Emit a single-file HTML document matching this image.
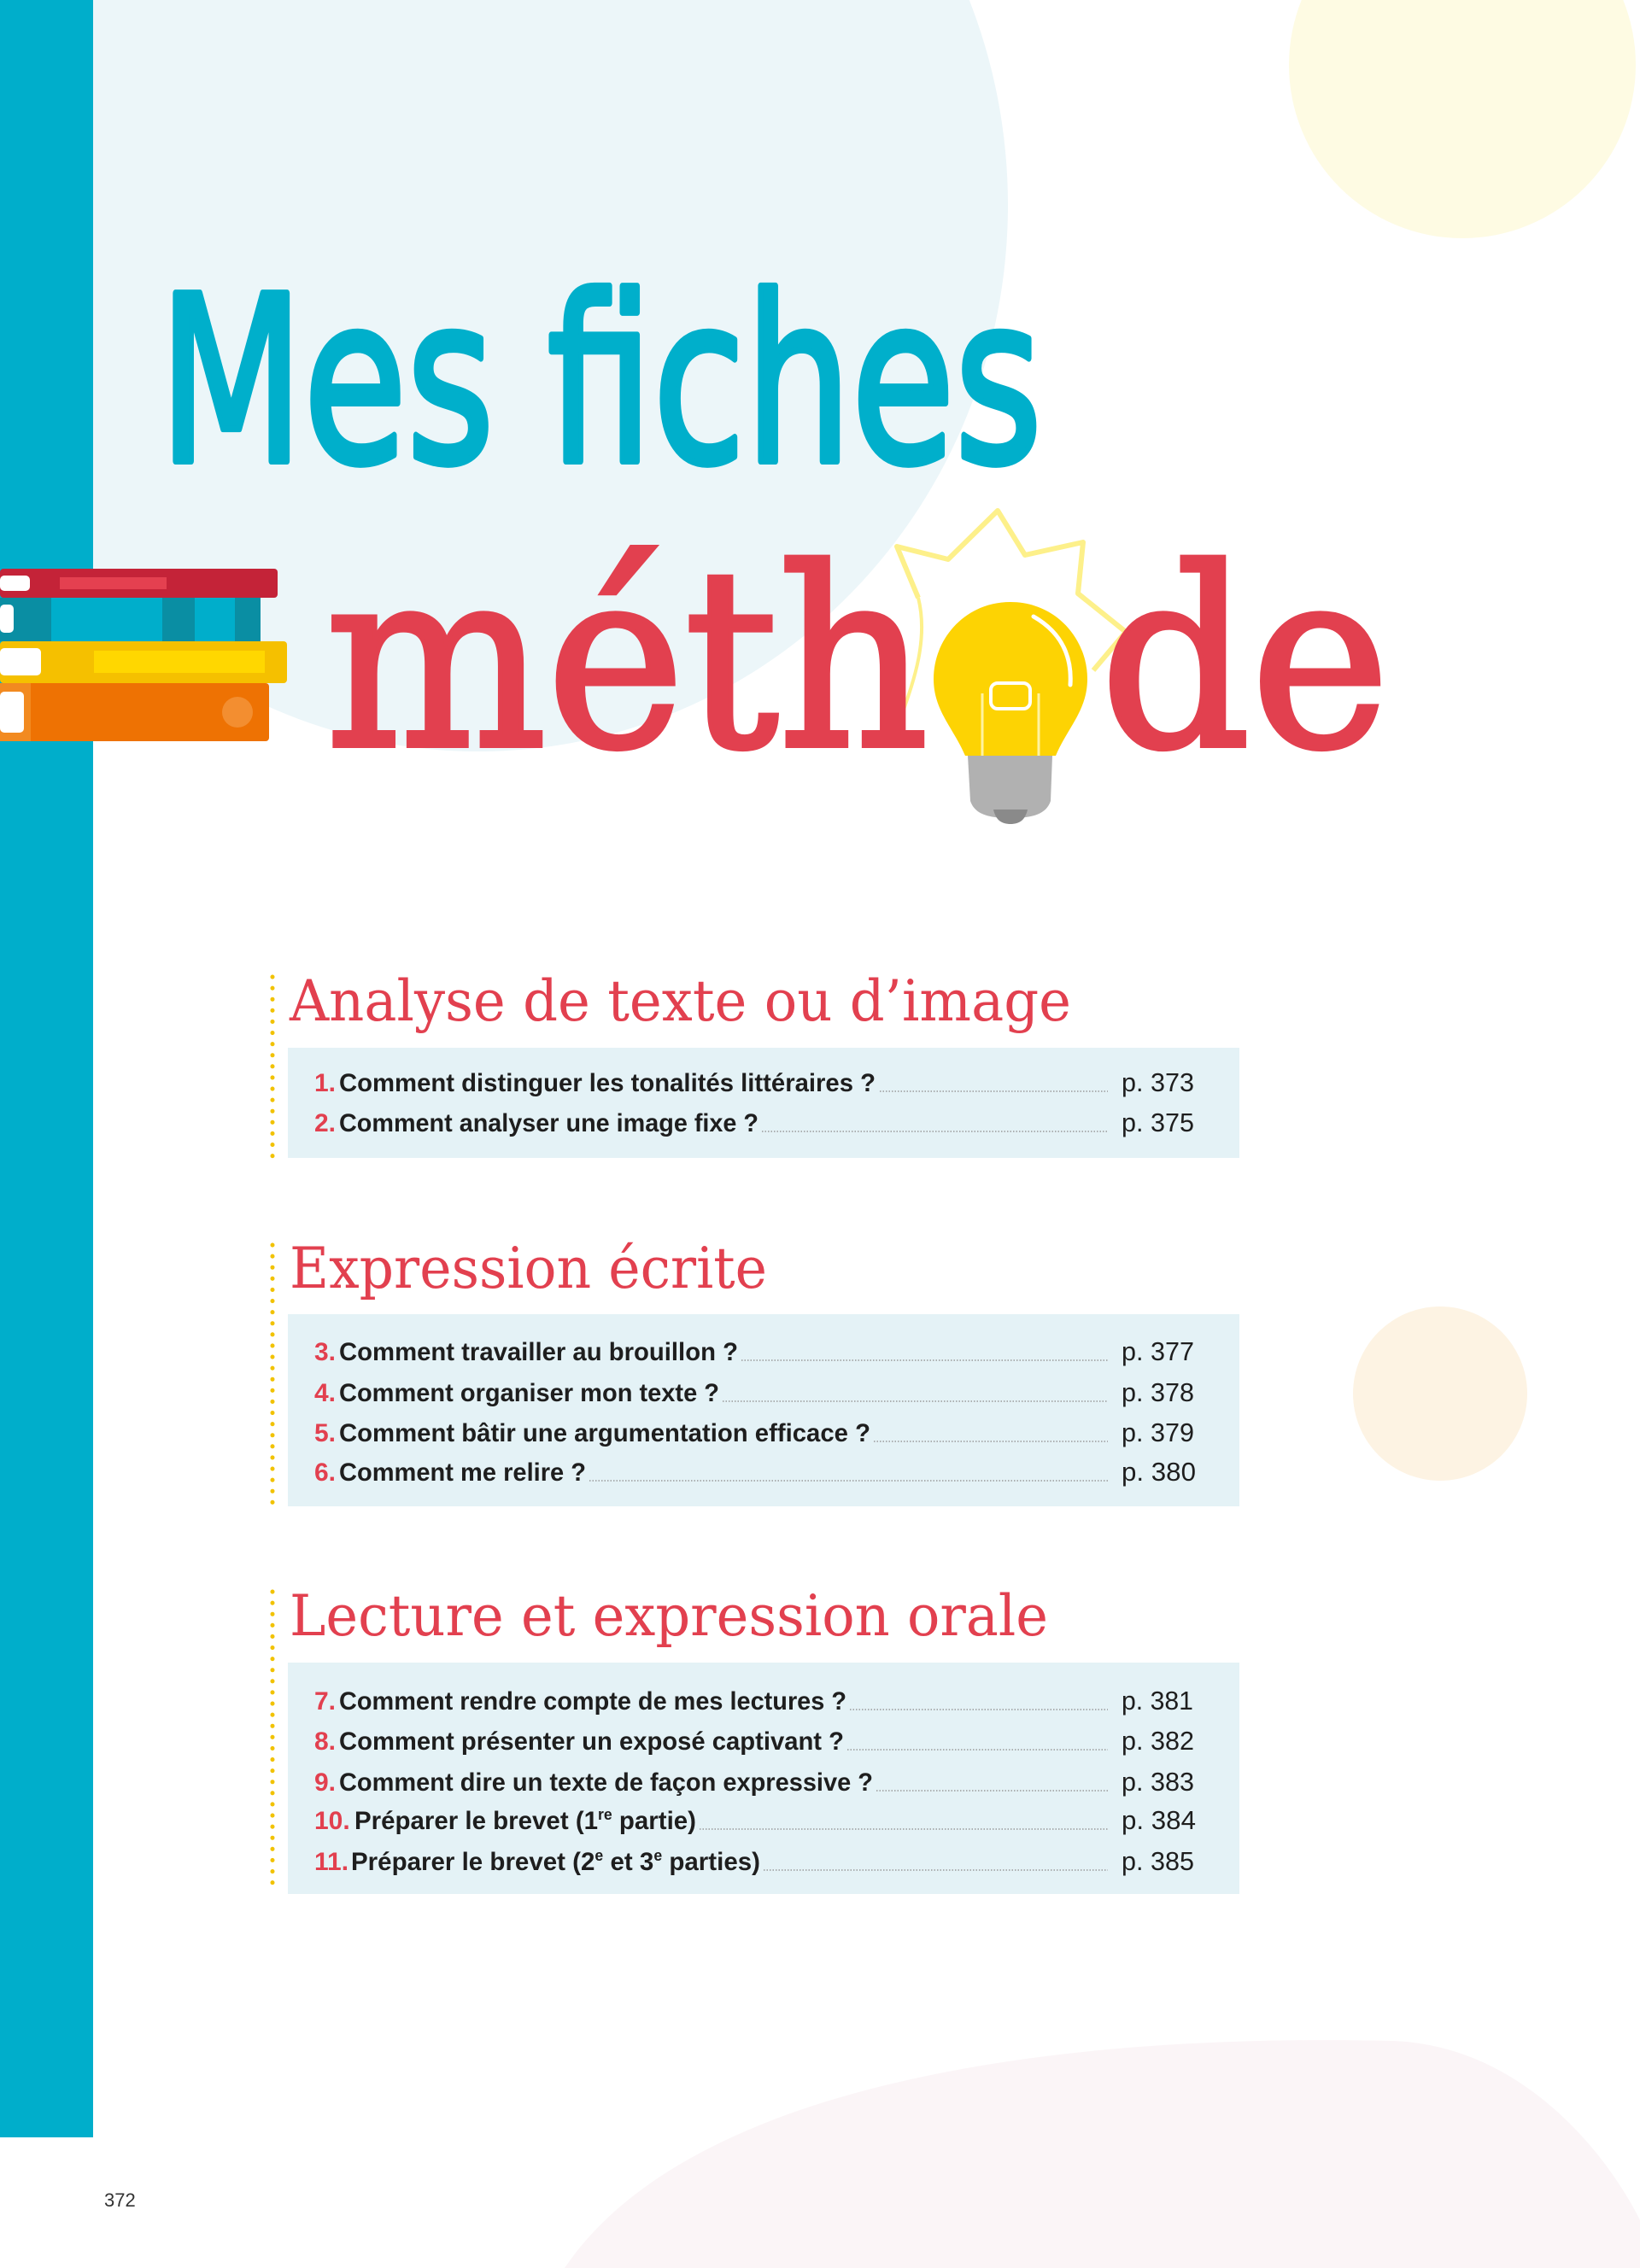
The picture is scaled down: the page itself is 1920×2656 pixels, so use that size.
<!DOCTYPE html>
<html><head><meta charset="utf-8"><style>
html,body{margin:0;padding:0;background:#fff}
body{width:1920px;height:2656px;position:relative;overflow:hidden}
svg{position:absolute;left:0;top:0}
</style></head><body>
<svg width="1920" height="2656" viewBox="0 0 1920 2656" xmlns="http://www.w3.org/2000/svg">
<ellipse cx="560" cy="240" rx="620" ry="640" fill="#ecf6f9"/>
<circle cx="1712" cy="76" r="203" fill="#fefbe3"/>
<circle cx="1686" cy="1632" r="102" fill="#fdf3e3"/>
<path d="M661 2656 C800 2450 1200 2380 1630 2390 C1780 2395 1880 2520 1920 2600 L1920 2656 Z" fill="#fbf5f7"/>
<rect x="0" y="0" width="109" height="2503" fill="#00aecb"/>

<text x="186" y="540" font-family="DejaVu Sans, sans-serif" font-size="270" fill="#00afcb" stroke="#00afcb" stroke-width="8" stroke-linejoin="round" textLength="1034" lengthAdjust="spacingAndGlyphs">Mes fiches</text>

<rect x="0" y="666" width="325" height="34" rx="4" fill="#c42338"/>
<rect x="70" y="676" width="125" height="14" fill="#e44050"/>
<rect x="0" y="674" width="35" height="18" rx="5" fill="#fff"/>
<rect x="0" y="700" width="305" height="51" rx="4" fill="#00aecb"/>
<rect x="190" y="700" width="38" height="51" fill="#0a8ea3"/>
<rect x="275" y="700" width="30" height="51" fill="#0a8ea3"/>
<rect x="0" y="700" width="60" height="51" fill="#0a8ea3"/>
<rect x="0" y="708" width="16" height="33" rx="5" fill="#fff"/>
<rect x="0" y="751" width="336" height="49" rx="4" fill="#f5c000"/>
<rect x="110" y="762" width="200" height="26" fill="#ffd700"/>
<rect x="0" y="759" width="48" height="32" rx="5" fill="#fff"/>
<rect x="0" y="800" width="315" height="68" rx="4" fill="#ee7203"/>
<rect x="0" y="800" width="36" height="68" fill="#f28a20"/>
<rect x="0" y="810" width="28" height="48" rx="5" fill="#fff"/>
<ellipse cx="278" cy="834" rx="18" ry="18" fill="#f38e30"/>

<path d="M1075 700 L1050 640 L1110 655 L1168 598 L1200 650 L1268 635 L1262 695 L1318 740 L1280 785" fill="none" stroke="#fdf08a" stroke-width="6" stroke-linejoin="round"/>
<path d="M1075 700 C1090 760 1060 820 1048 860" fill="none" stroke="#fdf08a" stroke-width="4"/>

<text x="381" y="873" font-family="DejaVu Serif, serif" font-size="290" fill="#e2404f" stroke="#e2404f" stroke-width="6" textLength="706" lengthAdjust="spacingAndGlyphs">méth</text>
<text x="1288" y="873" font-family="DejaVu Serif, serif" font-size="290" fill="#e2404f" stroke="#e2404f" stroke-width="6" textLength="339" lengthAdjust="spacingAndGlyphs">de</text>

<path d="M1183 705 C1236 705 1273 748 1273 795 C1273 832 1250 852 1236 885 L1130 885 C1116 852 1093 832 1093 795 C1093 748 1130 705 1183 705 Z" fill="#fdd303"/>
<path d="M1150 812 L1150 885 M1216 812 L1216 885" stroke="#fff3a0" stroke-width="3" fill="none"/>
<rect x="1160" y="800" width="46" height="30" rx="8" fill="none" stroke="#fff" stroke-width="4"/>
<path d="M1210 722 C1245 742 1255 772 1253 802" stroke="#fff" stroke-width="5" fill="none" stroke-linecap="round"/>
<path d="M1133 885 L1232 885 L1230 938 C1225 953 1210 958 1183 958 C1156 958 1141 953 1136 938 Z" fill="#b1b1b1"/>
<path d="M1163 948 L1203 948 C1200 961 1193 965 1183 965 C1173 965 1166 961 1163 948 Z" fill="#8a8a8a"/>

<line x1="319" y1="1144" x2="319" y2="1356" stroke="#f1c200" stroke-width="5" stroke-dasharray="0.1 13" stroke-linecap="round"/>
<text x="339" y="1195" font-family="DejaVu Serif, serif" font-size="66" fill="#e2404f" textLength="915" lengthAdjust="spacingAndGlyphs">Analyse de texte ou d’image</text>
<rect x="337" y="1227" width="1114" height="129" fill="#e4f2f6"/>

<line x1="319" y1="1458" x2="319" y2="1763" stroke="#f1c200" stroke-width="5" stroke-dasharray="0.1 13" stroke-linecap="round"/>
<text x="339" y="1508" font-family="DejaVu Serif, serif" font-size="66" fill="#e2404f" textLength="559" lengthAdjust="spacingAndGlyphs">Expression écrite</text>
<rect x="337" y="1539" width="1114" height="225" fill="#e4f2f6"/>

<line x1="319" y1="1864" x2="319" y2="2217" stroke="#f1c200" stroke-width="5" stroke-dasharray="0.1 13" stroke-linecap="round"/>
<text x="339" y="1915" font-family="DejaVu Serif, serif" font-size="66" fill="#e2404f" textLength="888" lengthAdjust="spacingAndGlyphs">Lecture et expression orale</text>
<rect x="337" y="1947" width="1114" height="271" fill="#e4f2f6"/>

<g font-family="Liberation Sans, sans-serif" font-size="30">
<g font-weight="bold" fill="#e2404f">
<text x="368" y="1278">1.</text><text x="368" y="1325">2.</text>
<text x="368" y="1593">3.</text><text x="368" y="1641">4.</text><text x="368" y="1688">5.</text><text x="368" y="1734">6.</text>
<text x="368" y="2002">7.</text><text x="368" y="2049">8.</text><text x="368" y="2097">9.</text><text x="368" y="2142">10.</text><text x="368" y="2190">11.</text>
</g>
<g font-weight="bold" fill="#1e1e1e">
<text x="397" y="1278" textLength="628" lengthAdjust="spacingAndGlyphs">Comment distinguer les tonalités littéraires ?</text>
<text x="397" y="1325" textLength="491" lengthAdjust="spacingAndGlyphs">Comment analyser une image fixe ?</text>
<text x="397" y="1593" textLength="467" lengthAdjust="spacingAndGlyphs">Comment travailler au brouillon ?</text>
<text x="397" y="1641" textLength="445" lengthAdjust="spacingAndGlyphs">Comment organiser mon texte ?</text>
<text x="397" y="1688" textLength="622" lengthAdjust="spacingAndGlyphs">Comment bâtir une argumentation efficace ?</text>
<text x="397" y="1734" textLength="289" lengthAdjust="spacingAndGlyphs">Comment me relire ?</text>
<text x="397" y="2002" textLength="594" lengthAdjust="spacingAndGlyphs">Comment rendre compte de mes lectures ?</text>
<text x="397" y="2049" textLength="591" lengthAdjust="spacingAndGlyphs">Comment présenter un exposé captivant ?</text>
<text x="397" y="2097" textLength="625" lengthAdjust="spacingAndGlyphs">Comment dire un texte de façon expressive ?</text>
<text x="415" y="2142" textLength="400" lengthAdjust="spacingAndGlyphs">Préparer le brevet (1<tspan font-size="18" dy="-11">re</tspan><tspan dy="11"> partie)</tspan></text>
<text x="411" y="2190" textLength="479" lengthAdjust="spacingAndGlyphs">Préparer le brevet (2<tspan font-size="18" dy="-11">e</tspan><tspan dy="11"> et 3</tspan><tspan font-size="18" dy="-11">e</tspan><tspan dy="11"> parties)</tspan></text>
</g>
<g stroke="#9a9a9a" stroke-width="1.5" stroke-dasharray="1.5 2">
<line x1="1030" y1="1278" x2="1297" y2="1278"/>
<line x1="892" y1="1325" x2="1297" y2="1325"/>
<line x1="868" y1="1593" x2="1297" y2="1593"/>
<line x1="846" y1="1641" x2="1297" y2="1641"/>
<line x1="1023" y1="1688" x2="1297" y2="1688"/>
<line x1="690" y1="1734" x2="1297" y2="1734"/>
<line x1="995" y1="2002" x2="1297" y2="2002"/>
<line x1="992" y1="2049" x2="1297" y2="2049"/>
<line x1="1026" y1="2097" x2="1297" y2="2097"/>
<line x1="819" y1="2142" x2="1297" y2="2142"/>
<line x1="894" y1="2190" x2="1297" y2="2190"/>
</g>
<g fill="#1e1e1e" font-size="31">
<text x="1313" y="1278" textLength="85" lengthAdjust="spacingAndGlyphs">p. 373</text>
<text x="1313" y="1325" textLength="85" lengthAdjust="spacingAndGlyphs">p. 375</text>
<text x="1313" y="1593" textLength="85" lengthAdjust="spacingAndGlyphs">p. 377</text>
<text x="1313" y="1641" textLength="85" lengthAdjust="spacingAndGlyphs">p. 378</text>
<text x="1313" y="1688" textLength="85" lengthAdjust="spacingAndGlyphs">p. 379</text>
<text x="1313" y="1734" textLength="87" lengthAdjust="spacingAndGlyphs">p. 380</text>
<text x="1313" y="2002" textLength="84" lengthAdjust="spacingAndGlyphs">p. 381</text>
<text x="1313" y="2049" textLength="85" lengthAdjust="spacingAndGlyphs">p. 382</text>
<text x="1313" y="2097" textLength="85" lengthAdjust="spacingAndGlyphs">p. 383</text>
<text x="1313" y="2142" textLength="87" lengthAdjust="spacingAndGlyphs">p. 384</text>
<text x="1313" y="2190" textLength="85" lengthAdjust="spacingAndGlyphs">p. 385</text>
</g>
</g>

<text x="122" y="2584" font-family="Liberation Sans, sans-serif" font-size="22" fill="#333">372</text>
</svg>
</body></html>
